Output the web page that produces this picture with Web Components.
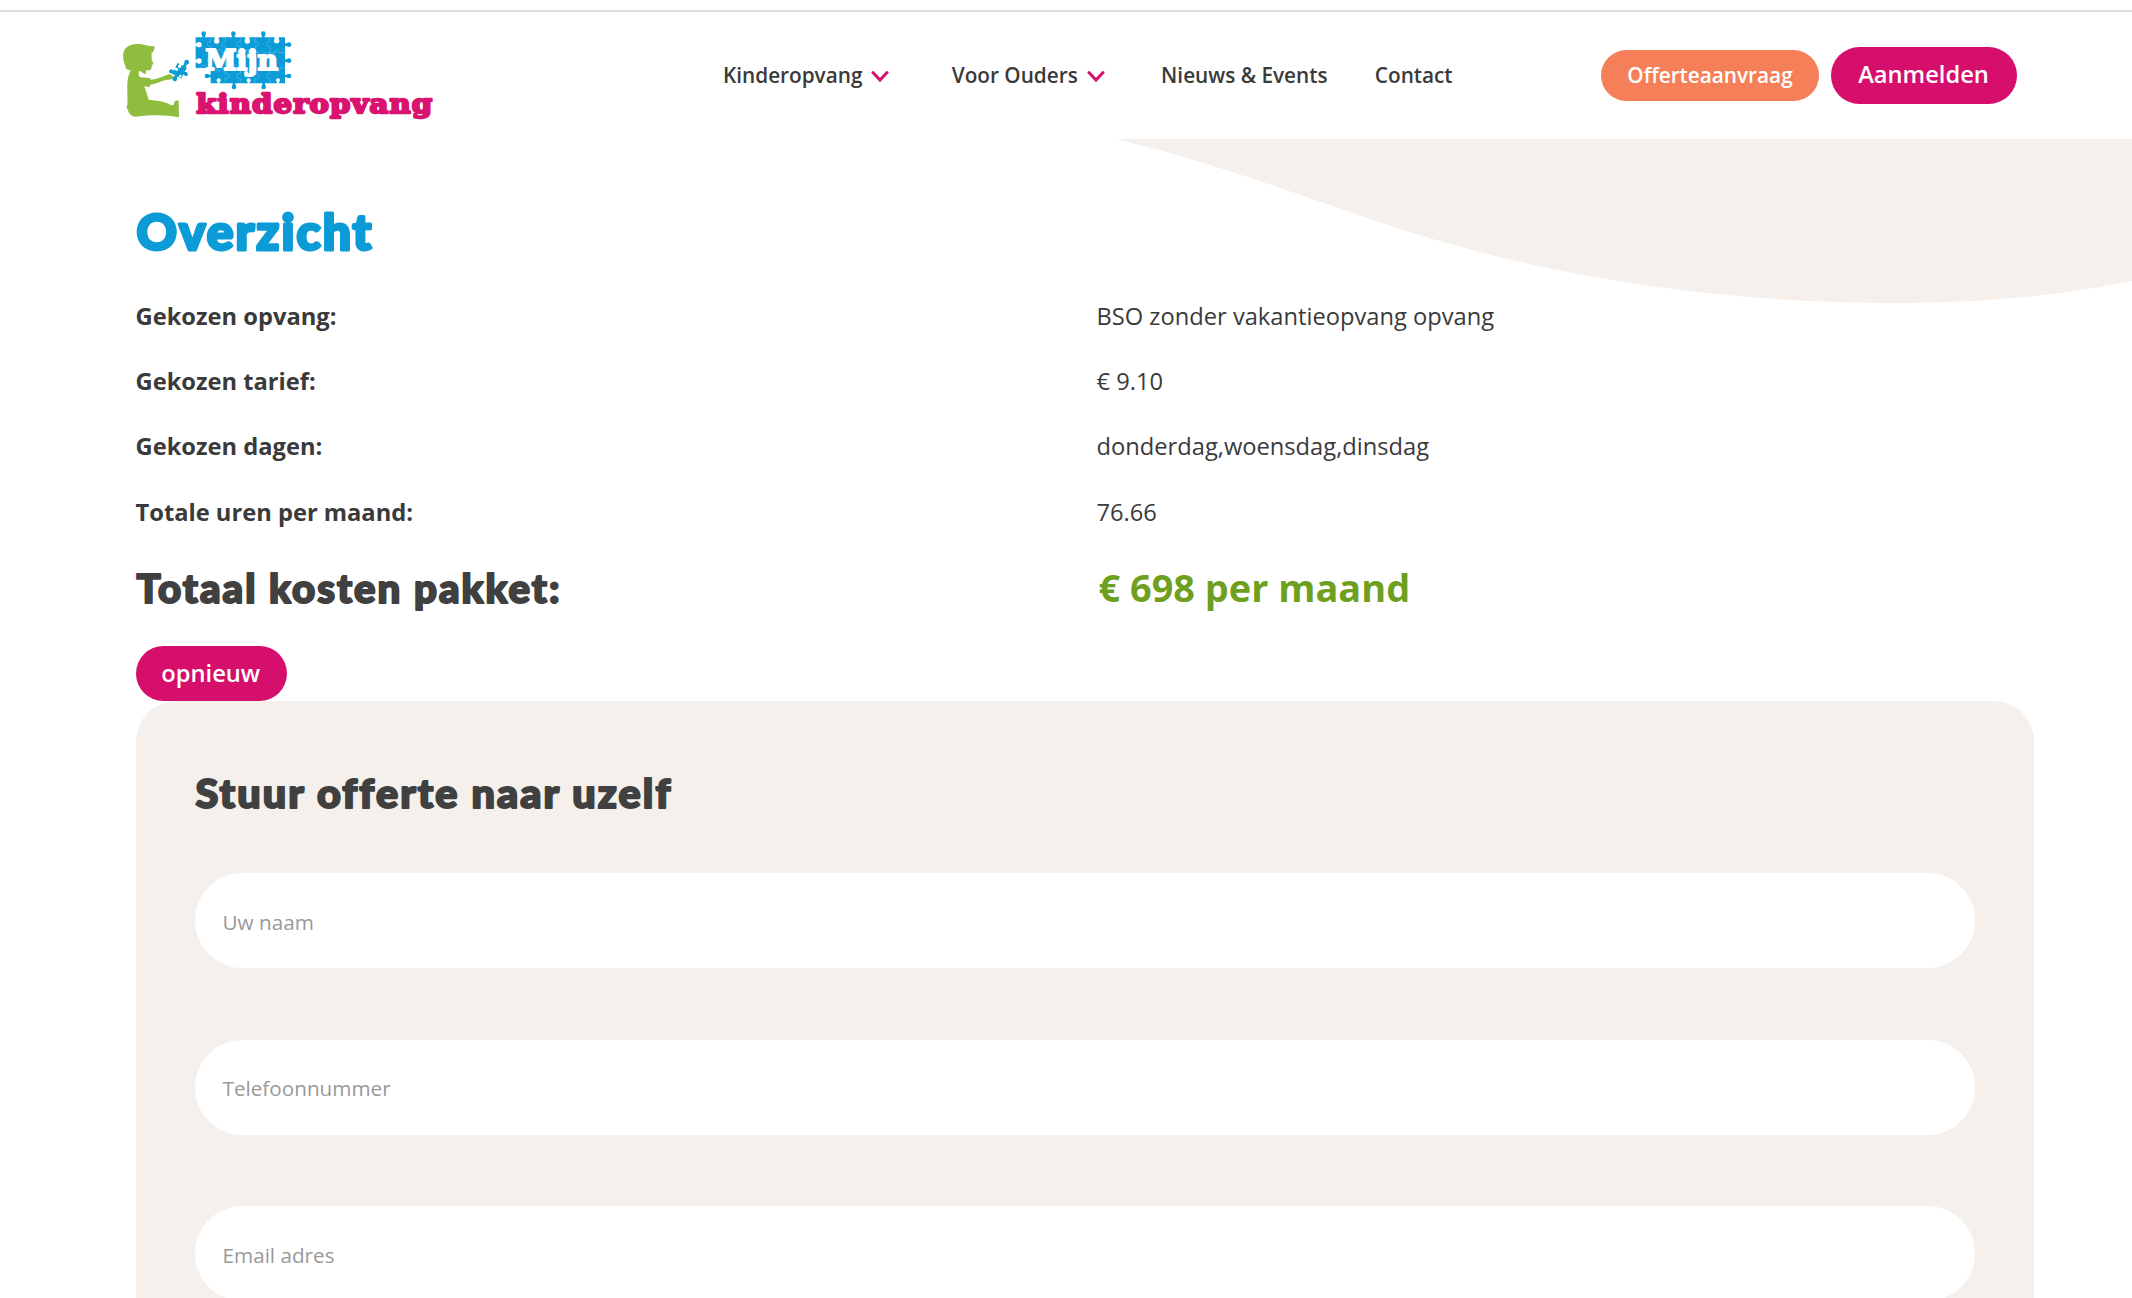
<!DOCTYPE html>
<html lang="nl">
<head>
<meta charset="utf-8">
<title>Mijn Kinderopvang</title>
<style>
html,body{margin:0;height:100%;background:#fff}
body{overflow:hidden;height:1298px;font-family:"Open Sans",sans-serif;color:#3a3a3a}
</style>
</head>
<body>
<mk-page></mk-page>
<script>
const define = (name, html) => {
  const template = document.createElement('template');
  customElements.define(name, class extends HTMLElement {
    constructor() {
      super();
      template.innerHTML = typeof html === 'function' ? html(this) : html;
      this.attachShadow({mode: 'open'}).append(template.content.cloneNode(true));
    }
  });
};

define('mk-logo', `
<style>:host{display:block;width:340px;height:100px;flex:none}svg{display:block}</style>
<svg width="340" height="100" viewBox="0 75 1020 300">
  <path fill="#8fbe3f" d="M47 145C58 133 76 131 94 133C108 135 122 141 134 138C134 148 130 156 124 161C127 169 124 176 125 181C128 187 132 190 129 193C126 195 125 197 125 202C124 211 119 212 108 211C107 215 111 219 106 222C99 221 96 214 89 213C85 217 85 226 90 232L119 234L123 239C142 238 160 229 178 222L190 229C189 240 182 239 172 239C158 241 138 251 121 254L119 262L103 258C107 272 112 285 116 299C138 302 166 303 184 316L191 314L194 303L206 301L207 352C173 345 128 343 79 350C66 351 57 344 53 328C48 324 49 320 52 316C54 288 50 260 53 240C54 228 60 218 62 211C52 211 46 205 46 197C38 180 36 157 47 145Z"/>
  <g transform="translate(208 212) rotate(27)" fill="#0b9bd7">
    <path d="M-15-18H16V18H-15Z"/>
    <path d="M-5 15h8v10h-8z"/><circle cx="-1" cy="28" r="7"/>
    <path d="M14-4h8v8h-8z"/><circle cx="22" cy="0" r="6"/>
    <path d="M3-32h9v16h-9z"/><circle cx="8" cy="-33" r="7"/>
    <path d="M-21 8h10v8h-10z"/><circle cx="-21" cy="13" r="6"/>
    <g fill="#fff"><circle cx="-5" cy="-12" r="5"/><path d="M-8-20h6v7h-6z"/><circle cx="-9" cy="0" r="4.5"/><path d="M-17-3h7v6h-7z"/><circle cx="10" cy="13" r="4"/></g>
  </g>
  <g fill="#0b9bd7">
    <path d="M257 112H525V250H302V204H257Z"/>
    <circle cx="281" cy="101" r="7"/><circle cx="370" cy="101" r="7"/><circle cx="460" cy="101" r="7"/>
    <path d="M277 100h8v14h-8zM366 100h8v14h-8zM456 100h8v14h-8zM523 130h12v8h-12zM523 178h12v8h-12zM523 224h12v8h-12zM368 248h8v14h-8zM457 248h8v14h-8zM290 224h14v8h-14z"/>
    <circle cx="537" cy="134" r="7"/><circle cx="537" cy="182" r="7"/><circle cx="537" cy="228" r="7"/>
    <circle cx="372" cy="261" r="7"/><circle cx="461" cy="261" r="7"/><circle cx="291" cy="228" r="7"/>
  </g>
  <g fill="#fff">
    <circle cx="267" cy="134" r="8"/><path d="M255 130h10v8h-10z"/>
    <circle cx="267" cy="183" r="8"/><path d="M255 179h10v8h-10z"/>
    <circle cx="320" cy="123" r="8"/><path d="M314 110h12v9h-12z"/>
    <circle cx="412" cy="123" r="8"/><path d="M406 110h12v9h-12z"/>
    <circle cx="500" cy="122" r="8"/><path d="M494 110h12v9h-12z"/>
    <circle cx="326" cy="241" r="6"/><path d="M323 242h6v9h-6z"/>
    <circle cx="416" cy="241" r="6"/><path d="M413 242h6v9h-6z"/>
    <circle cx="504" cy="241" r="6"/><path d="M501 242h6v9h-6z"/>
  </g>
  <g fill="none" stroke="#6cc2e8" stroke-width="1.6">
    <path d="M302 112V126C288 120 288 142 302 138V158H322C318 144 340 144 336 158H346V138C332 144 332 122 346 127V112"/>
    <path d="M391 112V126C377 120 377 142 391 138V158H368C372 170 350 170 354 158H346M435 112V128C450 122 450 144 435 140V158H413C417 146 397 146 401 158H391M480 112V126C466 120 466 144 480 139V158H460C464 170 442 170 446 158H435M525 158H505C509 146 491 146 495 158H480"/>
    <path d="M257 204H275C270 192 294 192 289 204H320C316 216 338 216 334 204H346V222C362 216 362 240 346 234V250M346 204H364C360 192 384 192 380 204H391V222C377 216 377 240 391 235V250M391 204H408C404 218 426 218 422 204H435V222C450 216 450 240 435 235V250M435 204H455C451 192 473 192 469 204H480V222C466 216 466 240 480 235V250M480 204H498C494 216 514 216 510 204H525"/>
    <path d="M302 158V176C288 170 288 192 302 188V204M346 158V204M391 158V204M435 158V204M480 158V204"/>
  </g>
  <g font-family="'DejaVu Serif',serif" font-weight="700" stroke-linejoin="round">
    <text x="286" y="210" font-size="85" textLength="218" lengthAdjust="spacingAndGlyphs" fill="#fff" stroke="#fff" stroke-width="6">Mijn</text>
    <text x="259" y="338" font-size="80" textLength="711" lengthAdjust="spacingAndGlyphs" letter-spacing="3" fill="#d9136f" stroke="#d9136f" stroke-width="7">kinderopvang</text>
  </g>
</svg>`);

define('mk-nav-item', `
<style>:host{display:flex;align-items:center;font-weight:600;font-size:20.75px;line-height:30px;white-space:nowrap}
svg{display:none;flex:none}:host([menu]) svg{display:block;margin:3px 0 0 9px}</style>
<slot></slot><svg width="18" height="13" viewBox="0 0 18 13"><path d="M2 2.5L9 10L16 2.5" fill="none" stroke="#d60f6d" stroke-width="3" stroke-linecap="round"/></svg>`);

define('mk-button', `
<style>:host{display:flex;align-items:center;justify-content:center;box-sizing:border-box;flex:none;border-radius:29px;background:#d60f6d;color:#fff;font-weight:600;font-size:23.7px;line-height:1;padding:0 1px 2px 0;white-space:nowrap}
:host([soft]){background:#f47f58;font-size:20.75px;padding:0}</style><slot></slot>`);

/* Rounded display heading: stroke with round joins softens the letter ends. */
define('mk-heading', el => `
<style>:host{display:block;height:60px}svg{display:block;overflow:visible}
text{font-family:Lato,sans-serif;font-weight:900;letter-spacing:2px;fill:currentColor;stroke:currentColor;stroke-width:${el.getAttribute('weight')}px;stroke-linejoin:round}</style>
<svg width="${el.getAttribute('span')}" height="60"><text x="0.5" y="43.5" font-size="${el.getAttribute('size')}" textLength="${el.getAttribute('span')}" lengthAdjust="spacingAndGlyphs">${el.getAttribute('text')}</text></svg>`);

define('mk-row', `
<style>:host{display:grid;grid-template-columns:961px 1fr;height:65.3px;align-items:center;font-size:23.7px;line-height:32px}
b{font-weight:700}</style><b><slot name="label"></slot></b><span><slot></slot></span>`);

define('mk-field', `
<style>:host{display:flex;align-items:center;box-sizing:border-box;flex:none;height:95px;border-radius:47.5px;background:#fff;color:#999;font-size:20.7px;padding:2.5px 28px 0}</style><slot></slot>`);

define('mk-wave', `
<style>:host{display:block;position:absolute;top:0;right:0;z-index:-1}svg{display:block}</style>
<svg width="1017" height="165" viewBox="0 0 1017 165"><path fill="#f5f0eb" d="M0 0C95 22 180 55 273 86C438 141 615 164 777 164C872 164 947 156 1017 142V0Z"/></svg>`);

define('mk-header', `
<style>:host{display:flex;align-items:center;box-sizing:border-box;flex:none;height:129px;margin-top:10px;border-top:2px solid #dedede;padding:0 115px 1px 110px}
mk-logo{align-self:flex-start;margin-top:13px}
nav{display:flex;gap:47.3px;margin-left:273px}
.a{margin-right:15px}.b{margin-right:9px}
.actions{display:flex;align-items:center;gap:12px;margin-left:auto;padding-top:1px}
.o{width:218px;height:51px}.m{width:186px;height:56.5px}</style>
<mk-logo></mk-logo>
<nav><mk-nav-item menu class="a">Kinderopvang</mk-nav-item><mk-nav-item menu class="b">Voor Ouders</mk-nav-item><mk-nav-item>Nieuws &amp; Events</mk-nav-item><mk-nav-item>Contact</mk-nav-item></nav>
<div class="actions"><mk-button soft class="o">Offerteaanvraag</mk-button><mk-button class="m">Aanmelden</mk-button></div>`);

define('mk-quote-form', `
<style>:host{display:flex;flex-direction:column;box-sizing:border-box;flex:1;min-height:0;overflow:hidden;border-radius:40px 40px 0 0;background:#f5f0eb;padding:62.5px 59px 0}
.fields{display:flex;flex-direction:column;gap:71.3px;margin-top:49.3px}mk-heading{color:#404040;flex:none}</style>
<mk-heading text="Stuur offerte naar uzelf" size="39.5" span="477" weight="2"></mk-heading>
<div class="fields"><mk-field>Uw naam</mk-field><mk-field>Telefoonnummer</mk-field><mk-field>Email adres</mk-field></div>`);

define('mk-page', `
<style>:host{display:flex;flex-direction:column;height:1298px;overflow:hidden}
main{display:flex;flex-direction:column;flex:1;min-height:0;position:relative;z-index:0;padding:67px 98px 0 135.5px}
mk-heading,mk-row{flex:none}
.title{color:#0b9bd7}
.rows{margin-top:17px}
.total{display:grid;grid-template-columns:963px 1fr;flex:none;margin-top:14.8px;height:60px;color:#404040}
.total strong{font-size:37.9px;line-height:56px;color:#6f9f1e}
.again{width:151.5px;height:55.5px;margin-top:27px;padding-bottom:.5px}</style>
<mk-header></mk-header>
<main>
<mk-wave></mk-wave>
<mk-heading class="title" text="Overzicht" size="49" span="237" weight="3"></mk-heading>
<div class="rows">
<mk-row><span slot="label">Gekozen opvang:</span>BSO zonder vakantieopvang opvang</mk-row>
<mk-row><span slot="label">Gekozen tarief:</span>€ 9.10</mk-row>
<mk-row><span slot="label">Gekozen dagen:</span>donderdag,woensdag,dinsdag</mk-row>
<mk-row><span slot="label">Totale uren per maand:</span>76.66</mk-row>
</div>
<div class="total"><mk-heading text="Totaal kosten pakket:" size="39.5" span="425" weight="2"></mk-heading><strong>€ 698 per maand</strong></div>
<mk-button class="again">opnieuw</mk-button>
<mk-quote-form></mk-quote-form>
</main>`);
</script>
</body>
</html>
